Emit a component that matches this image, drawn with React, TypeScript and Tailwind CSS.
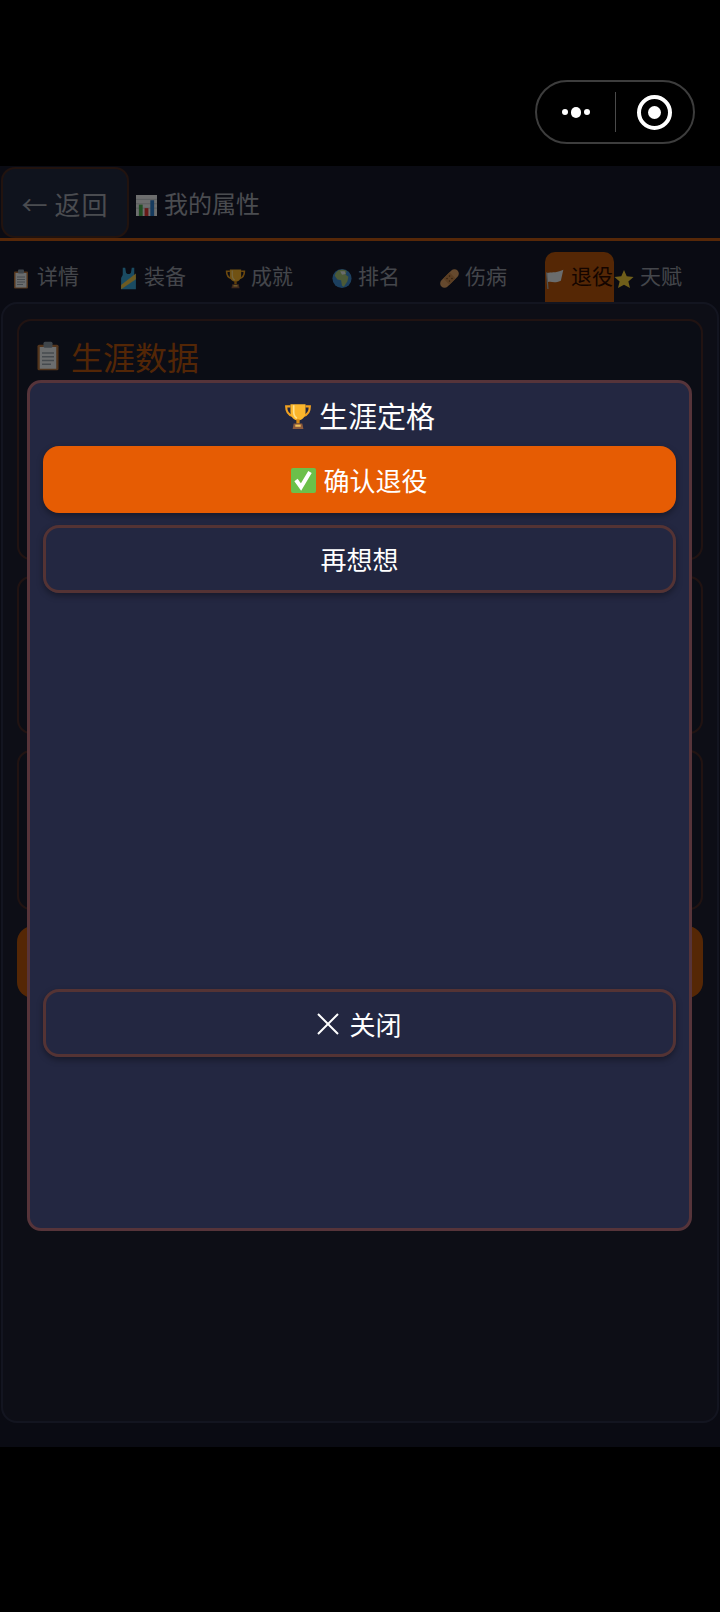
import React from "react";

const font = { fontFamily: '"Noto Sans CJK SC", "Noto Sans", sans-serif' };

const Clipboard = ({ size = 20 }: { size?: number }) => (
  <svg width={size * 0.8} height={size} viewBox="0 0 16 20" className="shrink-0">
    <rect x="1" y="2.5" width="14" height="17" rx="1" fill="#b9763f" />
    <rect x="2.5" y="4" width="11" height="14.5" fill="#eef1f3" />
    <rect x="5" y="0.5" width="6" height="4" rx="1" fill="#8d9aa5" />
    <path d="M4 8h8M4 10.5h8M4 13h8M4 15.5h6" stroke="#9aa5ad" strokeWidth="1" />
  </svg>
);

const Shirt = () => (
  <svg width="19" height="23" viewBox="0 0 20 28" className="shrink-0">
    <path d="M3 1h3l1 6c1 2 5 2 6 0l1-6h3v8c0 2 2 3 2 5v13H1V14c0-2 2-3 2-5z" fill="#3ba7d9" />
    <path d="M1 22 19 8v7L1 27z" fill="#f2c94c" />
  </svg>
);

const Trophy = ({ size = 21 }: { size?: number }) => (
  <svg width={size} height={size} viewBox="0 0 26 26" className="shrink-0">
    <path d="M6 4H2c0 5 2 8 6 9M20 4h4c0 5-2 8-6 9" fill="none" stroke="#f0a020" strokeWidth="2" />
    <path d="M6 2h14v7c0 5-3 8-7 8s-7-3-7-8z" fill="#fbb62c" />
    <path d="M9 3v6c0 3 1 5 3 6" fill="none" stroke="#ffe08a" strokeWidth="1.5" />
    <rect x="11.500" y="16" width="3" height="4" fill="#d98b14" />
    <path d="M9 20h8l1 5H8z" fill="#8d5a3c" />
    <rect x="10.500" y="21" width="5" height="2" fill="#f0c05a" />
  </svg>
);

const Globe = () => (
  <svg width="20" height="21" viewBox="0 0 22 22" className="shrink-0">
    <circle cx="11" cy="11" r="10.500" fill="#3f8fd6" />
    <path d="M7 2c3-1 7-1 9 1l-1 4 3 2-1 5-4 6-2-1-1-6-4-1-3-4 1-3z" fill="#a8c77a" />
    <path d="M9 3h5l1 3-4 1z" fill="#e8f0f0" />
  </svg>
);

const Bandage = () => (
  <svg width="21" height="21" viewBox="0 0 24 24" className="shrink-0">
    <g transform="rotate(-45 12 12)">
      <rect x="-1" y="7" width="26" height="10" rx="5" fill="#e0a366" />
      <rect x="7" y="7" width="10" height="10" fill="#c98a4e" />
      <circle cx="10" cy="10" r="0.9" fill="#6f4520" />
      <circle cx="14" cy="10" r="0.9" fill="#6f4520" />
      <circle cx="10" cy="14" r="0.9" fill="#6f4520" />
      <circle cx="14" cy="14" r="0.9" fill="#6f4520" />
    </g>
  </svg>
);

const Flag = () => (
  <svg width="20" height="22" viewBox="0 0 24 26" className="shrink-0">
    <path d="M2 6c6-2 9 1 20-4l-3 13C10 19 8 15 3 17z" fill="#eceff1" />
    <path d="M2 5l1.500 20" stroke="#b0b5b8" strokeWidth="1.500" />
  </svg>
);

const Star = () => (
  <svg width="20" height="20" viewBox="0 0 22 22" className="shrink-0">
    <path d="M11 1l3 7 7.500 .7-5.700 5 1.800 7.300L11 17.200 4.400 21l1.800-7.300-5.700-5L8 8z" fill="#f5d13b" />
  </svg>
);

const Chart = () => (
  <svg width="21" height="21" viewBox="0 0 22 24" preserveAspectRatio="none" className="shrink-0 mt-[5px]">
    <rect width="22" height="24" fill="#f1f3f4" />
    <path d="M0 5h22M0 10h22M0 15h22" stroke="#c3c9cd" strokeWidth="1" />
    <rect x="3" y="11" width="4" height="13" fill="#4caf50" />
    <rect x="9" y="15" width="4" height="9" fill="#e53935" />
    <rect x="15" y="6" width="4" height="18" fill="#2f80d0" />
  </svg>
);

const Check = () => (
  <svg width="25" height="25" viewBox="0 0 25 25" className="shrink-0 mt-[2px]">
    <rect width="25" height="25" rx="2" fill="#6cc04a" />
    <path d="M5 12l5 7 9-15" fill="none" stroke="#ffffff" strokeWidth="4" />
  </svg>
);

const Cross = () => (
  <svg width="22" height="22" viewBox="0 0 22 22" className="shrink-0 mt-[2px]">
    <path d="M1 1l20 20M21 1 1 21" stroke="#ffffff" strokeWidth="2" />
  </svg>
);

const tabs = [
  { icon: <Clipboard />, label: "详情", width: "w-[107px]" },
  { icon: <Shirt />, label: "装备", width: "w-[107px]" },
  { icon: <Trophy />, label: "成就", width: "w-[107px]" },
  { icon: <Globe />, label: "排名", width: "w-[107px]" },
  { icon: <Bandage />, label: "伤病", width: "w-[106px]" },
  { icon: <Flag />, label: "退役", width: "w-[69px]", active: true },
  { icon: <Star />, label: "天赋", width: "w-[100px]" },
];

const App = () => {
  return (
    <div className="w-[720px] h-[1612px] bg-black flex flex-col overflow-hidden" style={font}>
      {/* status bar with the mini program capsule */}
      <div className="h-[166px] shrink-0 flex justify-end items-start pt-[80px] pr-[25px]">
        <div className="w-[160px] h-[64px] rounded-full border-2 border-[#3d3d3d] flex items-center">
          <div className="w-[78px] flex items-center justify-center gap-[3px]">
            <span className="w-[6px] h-[6px] rounded-full bg-white" />
            <span className="w-[10px] h-[11px] rounded-full bg-white" />
            <span className="w-[6px] h-[6px] rounded-full bg-white" />
          </div>
          <div className="w-px h-[40px] bg-[#4a4a4a]" />
          <div className="flex-1 flex items-center justify-center">
            <div className="w-[35px] h-[35px] rounded-full border-[4px] border-white flex items-center justify-center">
              <span className="w-[13px] h-[13px] rounded-full bg-white" />
            </div>
          </div>
        </div>
      </div>

      <div className="relative h-[1281px] shrink-0 bg-[#171a2b] flex flex-col">
        {/* header */}
        <div className="h-[75px] shrink-0 flex items-center border-b-[3px] border-[#c25a12] pl-[1px]">
          <div className="w-[128px] h-[71px] rounded-[14px] border-2 border-[#4a2a22] bg-[#232a40] text-[#a4a8b2] text-[26px] tracking-[1px] pt-[2px] flex items-center justify-center gap-[9px]">
            <span className="-mr-[3px]">←</span>
            <span>返回</span>
          </div>
          <div className="ml-[7px] flex items-center gap-[7px] text-[24px] text-[#a4a8b2] pt-[2px]">
            <Chart />
            <span>我的属性</span>
          </div>
        </div>

        {/* tabs */}
        <div className="h-[61px] shrink-0 flex items-end pl-[11px]">
          {tabs.map((t) => (
            <div
              key={t.label}
              className={`${t.width} h-[50px] shrink-0 whitespace-nowrap rounded-t-[10px] flex items-center text-[21px] pb-[3px] ${
                t.active ? "bg-[#bc580c] text-[#2e0b00]" : "text-[#989ca6]"
              }`}
            >
              <span className="w-[20px] h-[24px] mt-[6px] mr-[6px] flex items-center justify-center shrink-0">{t.icon}</span>
              <span>{t.label}</span>
            </div>
          ))}
        </div>

        {/* panel behind the dialog */}
        <div className="mx-[1px] h-[1121px] shrink-0 rounded-[16px] border-2 border-[#2c3048] bg-[#1e2032] px-[14px] pt-[15px] flex flex-col gap-[16px]">
          <div className="h-[241px] shrink-0 rounded-[14px] border-2 border-[#4a2c28] bg-[#1a1e30] pl-[17px] pr-[16px] pt-[13px]">
            <div className="flex items-center gap-[11px] text-[#b8560f] text-[32px] leading-[44px]">
              <Clipboard size={30} />
              <span>生涯数据</span>
            </div>
          </div>
          <div className="h-[158px] shrink-0 rounded-[14px] border-2 border-[#4a2c28] bg-[#1a1e30]" />
          <div className="h-[160px] shrink-0 rounded-[14px] border-2 border-[#4a2c28] bg-[#1a1e30]" />
          <div className="h-[72px] shrink-0 rounded-[16px] bg-[#bc580c]" />
        </div>

        {/* dim layer */}
        <div className="absolute inset-0 bg-black/55" />

        {/* dialog */}
        <div className="absolute left-[27px] top-[214px] w-[665px] h-[851px] rounded-[14px] border-[3px] border-[#56343a] bg-[#232741] px-[13px] flex flex-col text-white">
          <div className="h-[63px] shrink-0 pt-[3px] flex items-center justify-center gap-[7px] text-[29px]">
            <Trophy size={28} />
            <span>生涯定格</span>
          </div>
          <div className="h-[67px] shrink-0 rounded-[16px] bg-[#e65c03] shadow-[0_3px_6px_rgba(0,0,0,0.35)] flex items-center justify-center gap-[7px] text-[26px]">
            <Check />
            <span>确认退役</span>
          </div>
          <div className="mt-[12px] h-[68px] shrink-0 rounded-[16px] border-[3px] border-[#543334] shadow-[0_3px_6px_rgba(0,0,0,0.35)] pb-[2px] flex items-center justify-center text-[26px]">
            再想想
          </div>
          <div className="mt-[396px] h-[68px] shrink-0 rounded-[16px] border-[3px] border-[#543334] shadow-[0_3px_6px_rgba(0,0,0,0.35)] flex items-center justify-center gap-[10px] text-[26px]">
            <Cross />
            <span>关闭</span>
          </div>
        </div>
      </div>
    </div>
  );
};

export default App;
